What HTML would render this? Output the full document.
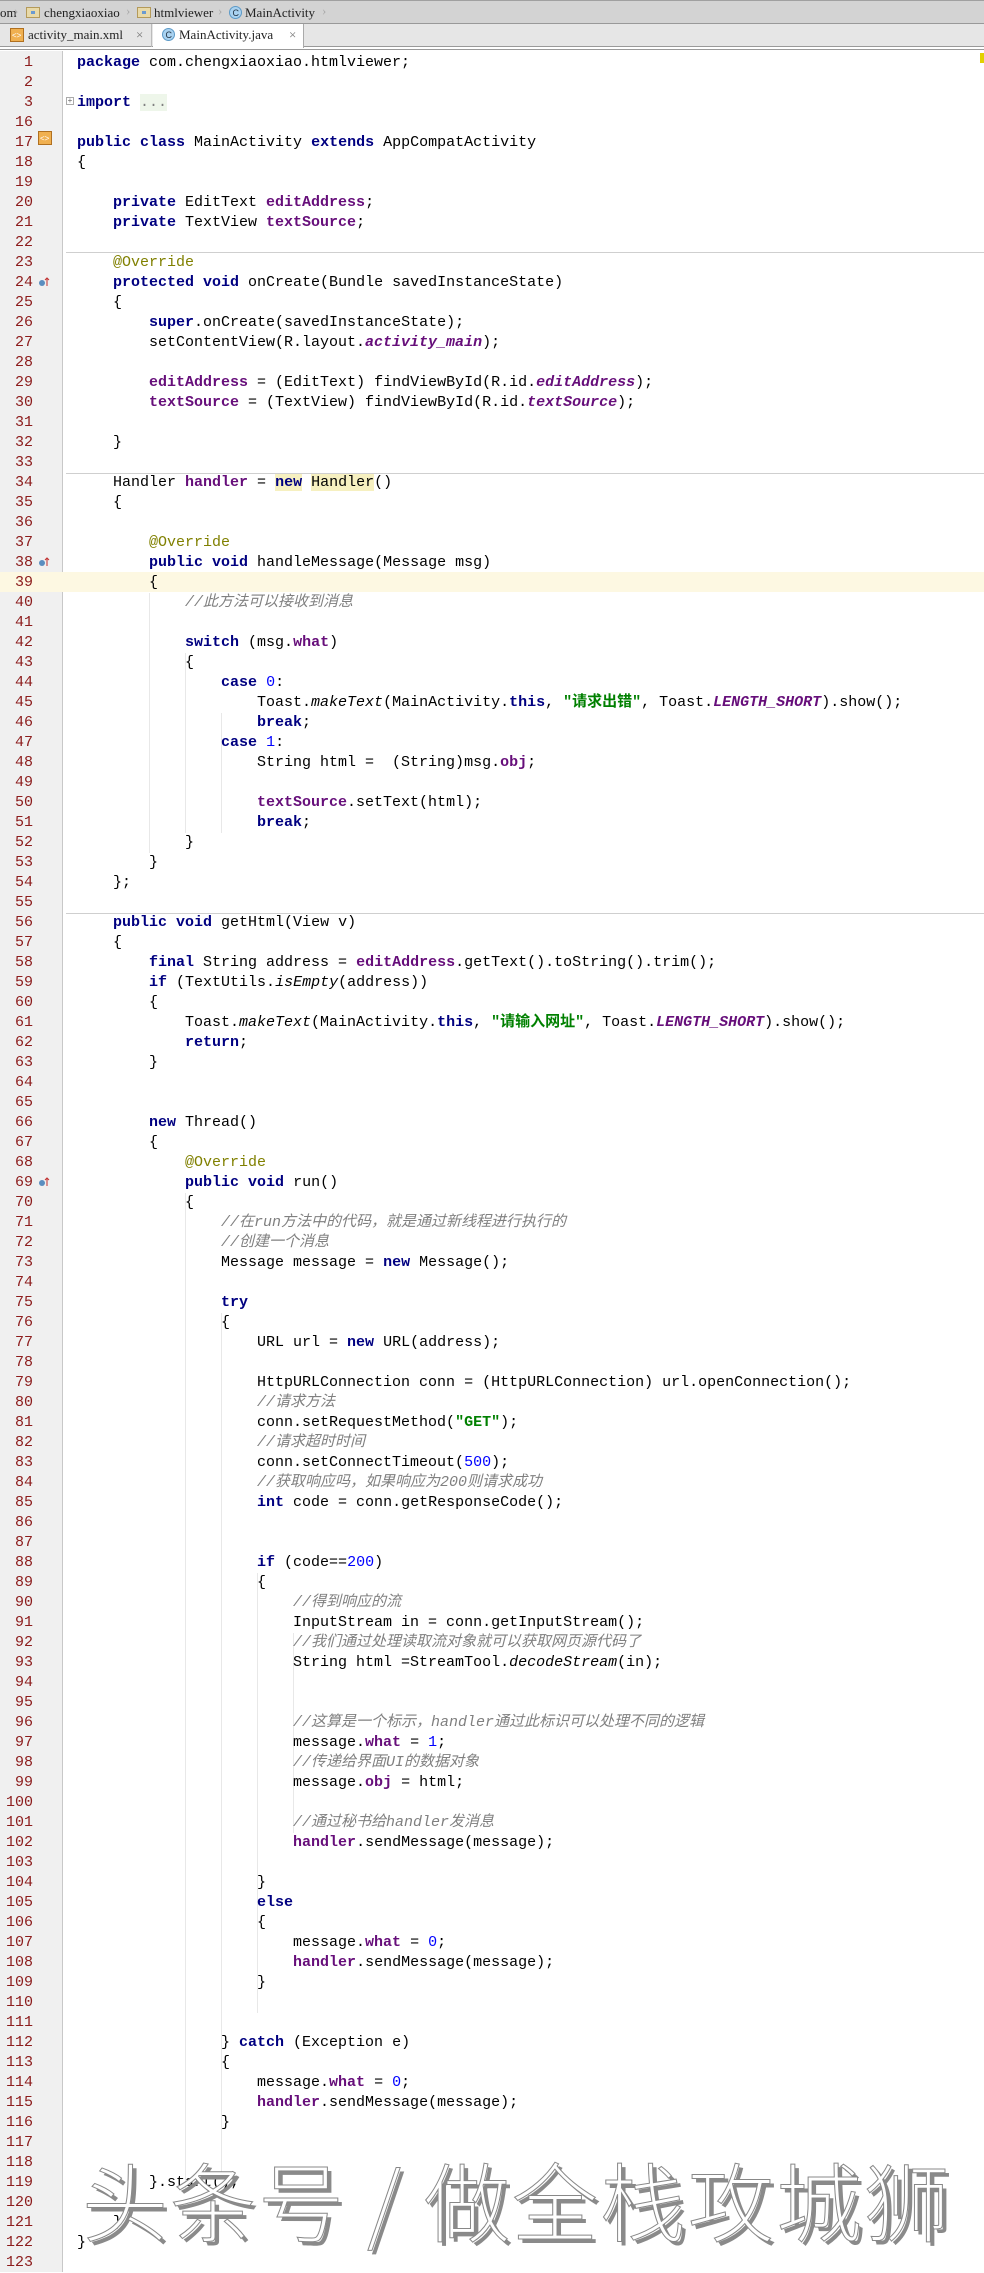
<!DOCTYPE html>
<html><head><meta charset="utf-8">
<style>
html,body{margin:0;padding:0;}
body{width:984px;height:2272px;overflow:hidden;background:#fff;position:relative;font-family:"Liberation Mono","Noto Sans CJK SC",monospace;}
#crumb{position:absolute;left:0;top:0;width:984px;height:24px;background:#d3d3d3;border-top:1px solid #a0a0a0;border-bottom:1px solid #999;box-sizing:border-box;font:13px "Liberation Serif",serif;color:#222;}
#crumb span{position:absolute;top:4px;}
#tabs{position:absolute;left:0;top:24px;width:984px;height:23px;background:#e6e6e6;border-bottom:1px solid #999;box-sizing:border-box;font:13px "Liberation Serif",serif;color:#222;}
#tabs .t{position:absolute;top:0;height:23px;line-height:22px;box-sizing:border-box;}
#line2{position:absolute;left:0;top:49px;width:984px;height:1px;background:#999;}
#gut{position:absolute;left:0;top:51px;width:62px;height:2221px;background:#f0f0f0;border-right:1px solid #c8c8c8;}
#nums{position:absolute;left:0;top:53px;width:33px;text-align:right;font-size:15px;line-height:20px;color:#8c1c1c;white-space:pre;}
#code{position:absolute;left:77px;top:53px;font-size:15px;line-height:20px;color:#000;white-space:pre;}
.hl{position:absolute;left:0;top:572px;width:984px;height:20px;background:#fdf8e2;}
.sep{position:absolute;left:66px;width:918px;height:1px;background:#cfcfcf;}
.k{color:#000080;font-weight:bold;}
.f{color:#660e7a;font-weight:bold;}
.fi{color:#660e7a;font-weight:bold;font-style:italic;}
.s{color:#008000;font-weight:bold;}
.n{color:#0000ff;}
.c{color:#808080;font-style:italic;}
.a{color:#808000;}
.i{font-style:italic;}
.g{color:#808080;}
.ig{position:absolute;width:1px;background:#e8e8e8;}
#wm{position:absolute;left:82px;top:2148px;font:300 86px "Noto Sans CJK SC","WenQuanYi Zen Hei",sans-serif;color:#fff;-webkit-text-stroke:1px #888;text-shadow:4px 4px 0 #8a8a8a;letter-spacing:2px;white-space:pre;line-height:100px;}
.ic{position:absolute;}
</style></head><body>
<div id="crumb">
<span style="left:0">om</span>
<span style="left:14px;top:2px;color:#aaa">›</span>
<svg class="ic" style="left:26px;top:5px" width="14" height="12"><rect x="0.5" y="1.5" width="13" height="10" fill="#e8d9a8" stroke="#b49a5a"/><rect x="5" y="5" width="4" height="3" fill="#6a9ad0"/></svg>
<span style="left:44px">chengxiaoxiao</span>
<span style="left:126px;top:2px;color:#aaa">›</span>
<svg class="ic" style="left:137px;top:5px" width="14" height="12"><rect x="0.5" y="1.5" width="13" height="10" fill="#e8d9a8" stroke="#b49a5a"/><rect x="5" y="5" width="4" height="3" fill="#6a9ad0"/></svg>
<span style="left:154px">htmlviewer</span>
<span style="left:218px;top:2px;color:#aaa">›</span>
<svg class="ic" style="left:229px;top:5px" width="13" height="13"><circle cx="6.5" cy="6.5" r="6" fill="#a9d2f0" stroke="#5c9ac8"/><text x="3.5" y="10" font-size="9" font-family="Liberation Sans" fill="#234">C</text></svg>
<span style="left:245px">MainActivity</span>
<span style="left:322px;top:2px;color:#aaa">›</span>
</div>
<div id="tabs">
<div class="t" style="left:0;width:152px;border-right:1px solid #bbb">
<svg class="ic" style="left:10px;top:4px" width="14" height="14"><rect x="0.5" y="0.5" width="13" height="13" fill="#f0b050" stroke="#b07020"/><text x="2" y="10" font-size="8" fill="#fff" font-family="Liberation Sans">&lt;&gt;</text></svg>
<span style="position:absolute;left:28px">activity_main.xml</span><span style="position:absolute;left:136px;color:#777">×</span></div>
<div class="t" style="left:153px;width:151px;background:#fff;height:24px;border-right:1px solid #aaa">
<svg class="ic" style="left:9px;top:4px" width="13" height="13"><circle cx="6.5" cy="6.5" r="6" fill="#a9d2f0" stroke="#5c9ac8"/><text x="3.5" y="10" font-size="9" font-family="Liberation Sans" fill="#234">C</text></svg>
<span style="position:absolute;left:26px">MainActivity.java</span><span style="position:absolute;left:136px;color:#777">×</span></div>
</div>
<div id="line2"></div>
<div id="gut"></div>
<div class="hl"></div>
<div style="position:absolute;left:980px;top:53px;width:4px;height:10px;background:#e2d000"></div>
<div class="sep" style="top:252px"></div>
<div class="sep" style="top:473px"></div>
<div class="sep" style="top:913px"></div>
<div class="ig" style="left:149px;top:593px;height:260px"></div>
<div class="ig" style="left:185px;top:653px;height:180px"></div>
<div class="ig" style="left:221px;top:713px;height:120px"></div>
<div class="ig" style="left:185px;top:1193px;height:1000px"></div>
<div class="ig" style="left:221px;top:1313px;height:860px"></div>
<div class="ig" style="left:257px;top:1573px;height:440px"></div>
<div class="ig" style="left:293px;top:1633px;height:200px"></div>
<svg class="ic" style="left:38px;top:131px" width="14" height="14"><rect x="0.5" y="0.5" width="13" height="13" fill="#f0b050" stroke="#b07020"/><text x="2" y="10" font-size="8" fill="#fff" font-family="Liberation Sans">&lt;&gt;</text></svg>
<svg class="ic" style="left:38px;top:276px" width="12" height="12"><circle cx="4" cy="7" r="3" fill="#5a8ec0"/><path d="M9 10V2M7 4l2-2 2 2" stroke="#c03030" fill="none"/></svg>
<svg class="ic" style="left:38px;top:556px" width="12" height="12"><circle cx="4" cy="7" r="3" fill="#5a8ec0"/><path d="M9 10V2M7 4l2-2 2 2" stroke="#c03030" fill="none"/></svg>
<svg class="ic" style="left:38px;top:1176px" width="12" height="12"><circle cx="4" cy="7" r="3" fill="#5a8ec0"/><path d="M9 10V2M7 4l2-2 2 2" stroke="#c03030" fill="none"/></svg>
<div style="position:absolute;left:66px;top:97px;width:8px;height:8px;border:1px solid #aaa;box-sizing:border-box;font:8px/6px 'Liberation Sans';color:#666;text-align:center;background:#fff">+</div>
<div id="nums">1
2
3
16
17
18
19
20
21
22
23
24
25
26
27
28
29
30
31
32
33
34
35
36
37
38
39
40
41
42
43
44
45
46
47
48
49
50
51
52
53
54
55
56
57
58
59
60
61
62
63
64
65
66
67
68
69
70
71
72
73
74
75
76
77
78
79
80
81
82
83
84
85
86
87
88
89
90
91
92
93
94
95
96
97
98
99
100
101
102
103
104
105
106
107
108
109
110
111
112
113
114
115
116
117
118
119
120
121
122
123</div>
<div id="code"><span class="k">package</span> com.chengxiaoxiao.htmlviewer;

<span class="k">import</span> <span class="g" style="background:#eef6ea">...</span>

<span class="k">public class</span> MainActivity <span class="k">extends</span> AppCompatActivity
{

    <span class="k">private</span> EditText <span class="f">editAddress</span>;
    <span class="k">private</span> TextView <span class="f">textSource</span>;

    <span class="a">@Override</span>
    <span class="k">protected void</span> onCreate(Bundle savedInstanceState)
    {
        <span class="k">super</span>.onCreate(savedInstanceState);
        setContentView(R.layout.<span class="fi">activity_main</span>);

        <span class="f">editAddress</span> = (EditText) findViewById(R.id.<span class="fi">editAddress</span>);
        <span class="f">textSource</span> = (TextView) findViewById(R.id.<span class="fi">textSource</span>);

    }

    Handler <span class="f">handler</span> = <span class="k" style="background:#f6f0c0">new</span> <span style="background:#f6f0c0">Handler</span>()
    {

        <span class="a">@Override</span>
        <span class="k">public void</span> handleMessage(Message msg)
        {
            <span class="c">//此方法可以接收到消息</span>

            <span class="k">switch</span> (msg.<span class="f">what</span>)
            {
                <span class="k">case</span> <span class="n">0</span>:
                    Toast.<span class="i">makeText</span>(MainActivity.<span class="k">this</span>, <span class="s">"请求出错"</span>, Toast.<span class="fi">LENGTH_SHORT</span>).show();
                    <span class="k">break</span>;
                <span class="k">case</span> <span class="n">1</span>:
                    String html =  (String)msg.<span class="f">obj</span>;

                    <span class="f">textSource</span>.setText(html);
                    <span class="k">break</span>;
            }
        }
    };

    <span class="k">public void</span> getHtml(View v)
    {
        <span class="k">final</span> String address = <span class="f">editAddress</span>.getText().toString().trim();
        <span class="k">if</span> (TextUtils.<span class="i">isEmpty</span>(address))
        {
            Toast.<span class="i">makeText</span>(MainActivity.<span class="k">this</span>, <span class="s">"请输入网址"</span>, Toast.<span class="fi">LENGTH_SHORT</span>).show();
            <span class="k">return</span>;
        }


        <span class="k">new</span> Thread()
        {
            <span class="a">@Override</span>
            <span class="k">public void</span> run()
            {
                <span class="c">//在run方法中的代码，就是通过新线程进行执行的</span>
                <span class="c">//创建一个消息</span>
                Message message = <span class="k">new</span> Message();

                <span class="k">try</span>
                {
                    URL url = <span class="k">new</span> URL(address);

                    HttpURLConnection conn = (HttpURLConnection) url.openConnection();
                    <span class="c">//请求方法</span>
                    conn.setRequestMethod(<span class="s">"GET"</span>);
                    <span class="c">//请求超时时间</span>
                    conn.setConnectTimeout(<span class="n">500</span>);
                    <span class="c">//获取响应吗，如果响应为200则请求成功</span>
                    <span class="k">int</span> code = conn.getResponseCode();


                    <span class="k">if</span> (code==<span class="n">200</span>)
                    {
                        <span class="c">//得到响应的流</span>
                        InputStream in = conn.getInputStream();
                        <span class="c">//我们通过处理读取流对象就可以获取网页源代码了</span>
                        String html =StreamTool.<span class="i">decodeStream</span>(in);


                        <span class="c">//这算是一个标示，handler通过此标识可以处理不同的逻辑</span>
                        message.<span class="f">what</span> = <span class="n">1</span>;
                        <span class="c">//传递给界面UI的数据对象</span>
                        message.<span class="f">obj</span> = html;

                        <span class="c">//通过秘书给handler发消息</span>
                        <span class="f">handler</span>.sendMessage(message);

                    }
                    <span class="k">else</span>
                    {
                        message.<span class="f">what</span> = <span class="n">0</span>;
                        <span class="f">handler</span>.sendMessage(message);
                    }


                } <span class="k">catch</span> (Exception e)
                {
                    message.<span class="f">what</span> = <span class="n">0</span>;
                    <span class="f">handler</span>.sendMessage(message);
                }


        }.start();

    }
}
</div>
<div id="wm">头条号 / 做全栈攻城狮</div>
</body></html>
